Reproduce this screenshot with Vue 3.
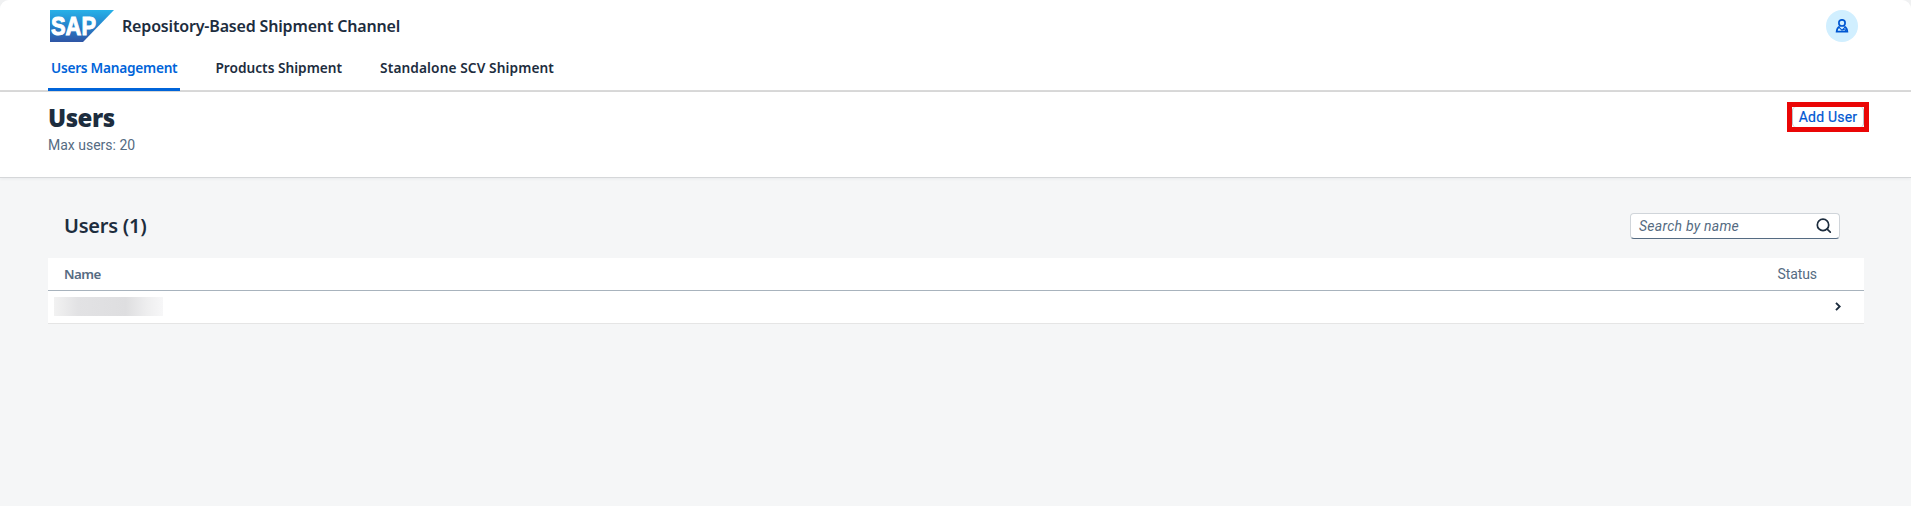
<script setup>
const tabs = [
  { label: 'Users Management', cls: 'tab-users', active: true },
  { label: 'Products Shipment', cls: 'tab-products', active: false },
  { label: 'Standalone SCV Shipment', cls: 'tab-scv', active: false },
]
</script>

<template>
  <div class="page">
    <header class="shell">
      <div class="shell-bar">
        <svg class="logo" width="64" height="32" viewBox="0 0 64 32">
          <defs>
            <linearGradient id="logo-fill" x1="0" y1="0" x2="0" y2="1">
              <stop offset="0" stop-color="#27b1e8" />
              <stop offset="0.5" stop-color="#2583cb" />
              <stop offset="1" stop-color="#2f55a5" />
            </linearGradient>
          </defs>
          <path d="M0 0H64L33 32H0Z" fill="url(#logo-fill)" />
          <text class="logo-text" x="1" y="25" textLength="45" lengthAdjust="spacingAndGlyphs">SAP</text>
        </svg>
        <span class="product">Repository-Based Shipment Channel</span>
        <button class="avatar" aria-label="Profile">
          <svg width="14" height="14" viewBox="0 0 14 14" fill="none" stroke="#0057d2" stroke-width="1.7">
            <circle cx="7" cy="3.9" r="3.1" />
            <path d="M4.6 7.4C2.8 8.4 1.8 9.8 1.6 12.7H12.4C12.2 9.8 11.2 8.4 9.4 7.4" />
            <path d="M3.8 8.2L7 11.2L10.2 8.2M7.6 10.7H10.6V12.4" stroke-width="1.1" />
          </svg>
        </button>
      </div>
      <nav class="tabs">
        <a v-for="t in tabs" :key="t.label" class="tab" :class="{ active: t.active }"><span :class="t.cls">{{ t.label }}</span></a>
      </nav>
    </header>

    <section class="page-header">
      <div>
        <h1>Users</h1>
        <p class="max-users">Max users: 20</p>
      </div>
      <div class="highlight"><button class="add-user">Add User</button></div>
    </section>

    <main class="content">
      <div class="toolbar">
        <h2>Users (1)</h2>
        <div class="search">
          <span class="placeholder">Search by name</span>
          <svg width="16" height="16" viewBox="0 0 16 16" fill="none" stroke="#1d2d3e" stroke-width="1.7" stroke-linecap="round">
            <circle cx="7" cy="6.9" r="5.7" />
            <path d="M11.2 11.1L14.3 14.1" />
          </svg>
        </div>
      </div>
      <div class="table">
        <div class="row head">
          <span class="name">Name</span>
          <span class="status">Status</span>
        </div>
        <div class="row item">
          <span class="redacted"></span>
          <svg class="chevron" width="6" height="9" viewBox="0 0 6 9" fill="none" stroke="#1d2d3e" stroke-width="1.9">
            <path d="M1 0.8L4.7 4.5L1 8.2" />
          </svg>
        </div>
      </div>
    </main>
  </div>
</template>

<style>
body {
  background: #f0f1f2;
}
</style>

<style scoped>
.page {
  box-sizing: border-box;
  height: 506px;
  overflow: hidden;
  border-radius: 9px 9px 0 0;
  background: #f5f6f7;
  color: #1d2d3e;
  font: 14px/18px "Noto Sans", "Open Sans", sans-serif;
  white-space: nowrap;
}
button {
  padding: 0;
  border: 0;
  font: inherit;
}
.shell {
  box-sizing: border-box;
  height: 92px;
  background: #fff;
  border-bottom: 2px solid #d9d9d9;
}
.shell-bar {
  display: flex;
  align-items: center;
  height: 52px;
  padding: 0 53px 0 50px;
}
.logo-text {
  font: 900 26px "Liberation Sans", Arial, sans-serif;
  fill: #fff;
  stroke: #fff;
  stroke-width: 1;
}
.product {
  margin-left: 8px;
  font-size: 16px;
  font-weight: 600;
  letter-spacing: -0.17px;
}
.avatar {
  display: flex;
  align-items: center;
  justify-content: center;
  width: 32px;
  height: 32px;
  margin-left: auto;
  border-radius: 50%;
  background: #d1efff;
}
.tabs {
  display: flex;
  gap: 32px;
  height: 39px;
  padding-left: 48px;
}
.tab {
  box-sizing: border-box;
  height: 39px;
  padding: 7px 3px 0;
  font-size: 13.7px;
  font-weight: 600;
}
.tab-users {
  letter-spacing: -0.27px;
}
.tab-scv {
  letter-spacing: 0.1px;
}
.tab.active {
  color: #0064d9;
  border-bottom: 3px solid #0064d9;
  border-radius: 2px 2px 0 0;
}
.page-header {
  box-sizing: border-box;
  display: flex;
  justify-content: space-between;
  height: 86px;
  padding: 10px 42px 0 48px;
  background: #fff;
  border-bottom: 1px solid #d5d7d9;
  box-shadow: 0 1px 3px rgba(34, 53, 72, 0.06);
}
h1 {
  margin: 0;
  font: 900 24px/32px "Noto Sans", sans-serif;
  letter-spacing: -0.5px;
}
.max-users {
  margin: 2px 0 0;
  color: #556b82;
  font-family: Roboto, sans-serif;
}
.highlight {
  box-sizing: border-box;
  width: 82px;
  height: 30px;
  border: 5px solid #ea0606;
}
.add-user {
  box-sizing: border-box;
  display: block;
  width: 72px;
  height: 20px;
  border: solid #bcc3ca;
  border-width: 0 1px;
  border-radius: 4px;
  background: #fff;
  color: #0057d2;
  font: 400 14px/20px Roboto, sans-serif;
  letter-spacing: 0.2px;
  -webkit-text-stroke: 0.2px #0057d2;
}
.content {
  padding: 35px 47px 0 48px;
}
.toolbar {
  display: flex;
  align-items: center;
  justify-content: space-between;
  height: 26px;
  margin-bottom: 19px;
  padding: 0 24px 0 16px;
}
h2 {
  margin: 0;
  font: 600 20px/26px "Noto Sans", sans-serif;
  letter-spacing: -0.25px;
}
.search {
  box-sizing: border-box;
  display: flex;
  align-items: center;
  justify-content: space-between;
  width: 210px;
  height: 26px;
  padding: 0 7px 0 8px;
  border: 1px solid #d0d5da;
  border-bottom-color: #556b82;
  border-radius: 4px;
  background: #fff;
}
.placeholder {
  color: #556b82;
  font: italic 14px/18px Roboto, sans-serif;
  letter-spacing: 0.25px;
}
.table {
  background: #fff;
}
.row {
  box-sizing: border-box;
  display: flex;
  align-items: center;
  justify-content: space-between;
  height: 33px;
}
.head {
  padding: 0 47px 0 16px;
  border-bottom: 1px solid #a8b3bd;
  color: #556b82;
}
.name {
  font-size: 13.3px;
  font-weight: 600;
  letter-spacing: -0.5px;
}
.status {
  font-family: Roboto, sans-serif;
  letter-spacing: -0.1px;
}
.item {
  padding: 0 23px 1px 6px;
  border-bottom: 1px solid #e5e5e5;
}
.redacted {
  width: 109px;
  height: 19px;
  background: linear-gradient(90deg, #f2f2f2, #e2e2e4 22%, #dedee0 66%, #eeeeef 85%, #f7f7f8);
}
</style>
